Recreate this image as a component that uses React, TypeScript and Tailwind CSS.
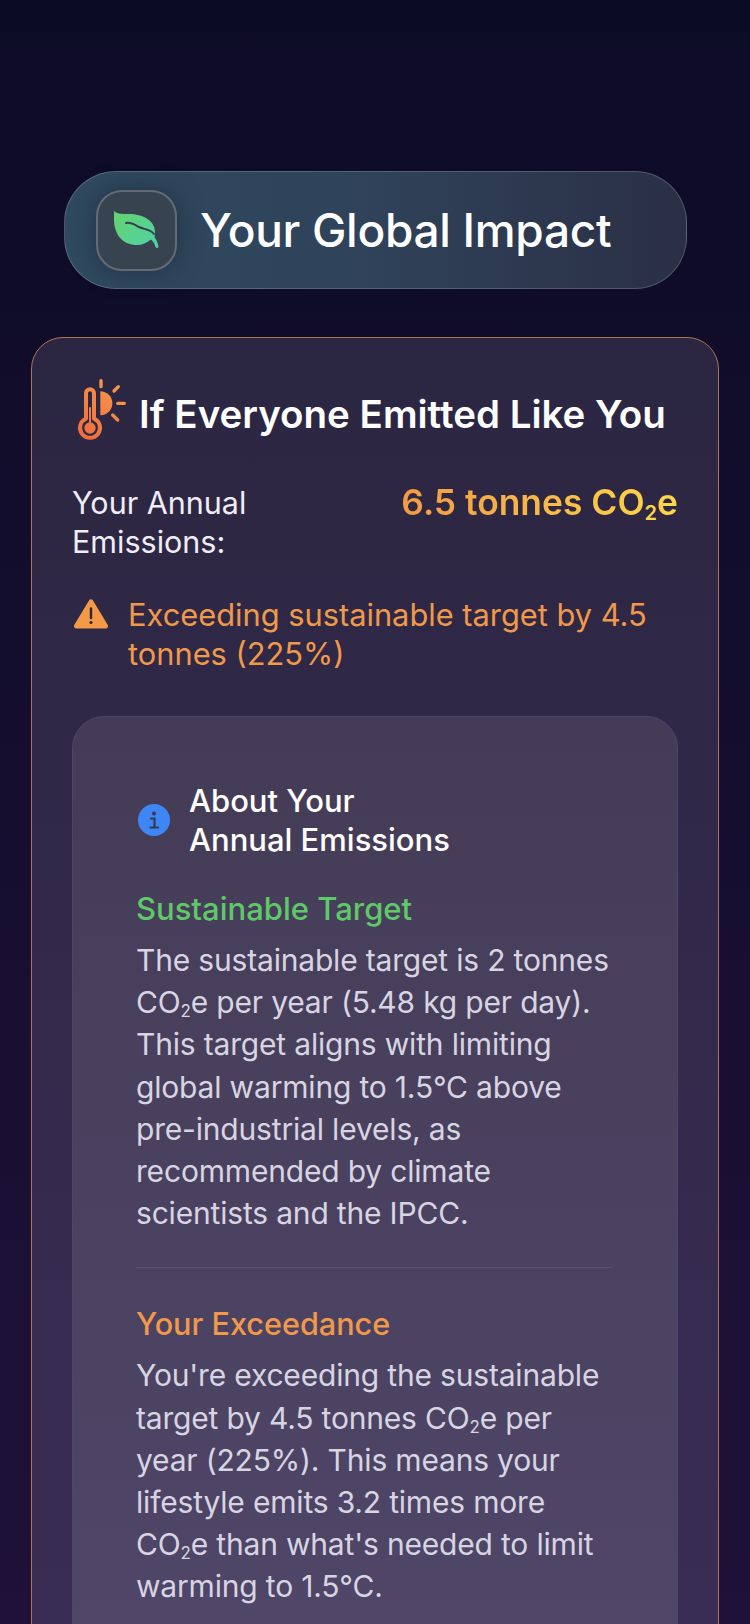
import React from "react";

function Leaf() {
  return (
    <svg width="45" height="38" viewBox="0 0 45 38" fill="none">
      <defs>
        <linearGradient id="leafG" x1="4" y1="4" x2="40" y2="36" gradientUnits="userSpaceOnUse">
          <stop offset="0" stopColor="#63d274" />
          <stop offset="1" stopColor="#4fd3a3" />
        </linearGradient>
      </defs>
      <path d="M0 0 C3 3 8 3 15 3 C28 3 41 9 41 21 C41 23 41 25 40.500 26 C42.500 29 44 32 44.500 36 C43.500 37.500 42 37 41.500 36 C41 33 39 30 37 28.500 C33 32 28 34 23 34 C9 34 0 24 0 8 Z" fill="url(#leafG)" />
      <path d="M12 12 C17 11 21 14 25 16 C30 18.500 36 18 40 23" stroke="#37404f" strokeWidth="2" strokeLinecap="round" fill="none" />
    </svg>
  );
}

function ThermoSun() {
  return (
    <svg width="64" height="80" viewBox="6 0 192 240" fill="none" className="shrink-0">
      <defs>
        <linearGradient id="tsG" x1="180" y1="30" x2="30" y2="210" gradientUnits="userSpaceOnUse">
          <stop offset="0" stopColor="#f9a24e" />
          <stop offset="1" stopColor="#ee6a3e" />
        </linearGradient>
      </defs>
      <path d="M91 70 A36 36 0 0 1 91 142 Z" fill="url(#tsG)" />
      <g stroke="url(#tsG)" strokeWidth="10" strokeLinecap="round">
        <path d="M93 38 V56" />
        <path d="M132 69 L145 56" />
        <path d="M143 106 H163" />
        <path d="M128 141 L143 156" />
      </g>
      <path d="M48 152 V76 A12 12 0 0 1 72 76 V152 A30 30 0 1 1 48 152 Z" stroke="url(#tsG)" strokeWidth="12" fill="none" strokeLinejoin="round" />
      <path d="M60 120 V170" stroke="url(#tsG)" strokeWidth="6" strokeLinecap="round" />
      <circle cx="60" cy="180" r="17" fill="url(#tsG)" />
    </svg>
  );
}

function Warn() {
  return (
    <svg width="34" height="30" viewBox="0 0 34 30" className="shrink-0">
      <path d="M17 3 L31.500 27 H2.500 Z" fill="#f29a48" stroke="#f29a48" strokeWidth="5" strokeLinejoin="round" />
      <path d="M17 9.500 V19" stroke="#2c2640" strokeWidth="2.400" strokeLinecap="round" />
      <circle cx="17" cy="23.500" r="1.600" fill="#2c2640" />
    </svg>
  );
}

function Info() {
  return (
    <svg width="32" height="32" viewBox="0 0 32 32" className="shrink-0">
      <circle cx="16" cy="16" r="16" fill="#3f86f5" />
      <circle cx="16" cy="9.500" r="2" fill="#3a3550" />
      <path d="M13 14.500 H16.500 V23 M12.500 23.500 H20" stroke="#3a3550" strokeWidth="2.200" fill="none" strokeLinecap="round" />
    </svg>
  );
}

const Sub = () => <sub className="text-[17px]">2</sub>;

export default function App() {
  return (
    <div
      className="h-[1624px] w-[750px] overflow-hidden bg-gradient-to-b from-[#0c0b26] to-[#1f1139] pt-[171px] text-white"
      style={{ fontFamily: "Inter, 'Noto Sans', sans-serif" }}
    >
      <div className="mx-[64px] flex h-[118px] w-[623px] items-center rounded-[52px] border border-[#ffffff2e] bg-gradient-to-r from-[#2f4a60] via-[#2f4259] to-[#2a2f45] pl-[31px]">
        <div className="flex h-[81px] w-[81px] shrink-0 items-center justify-center rounded-[26px] border-2 border-[#ffffff38] bg-[#384350] shadow-[0_0_24px_rgba(20,30,45,0.5)]">
          <Leaf />
        </div>
        <h1 className="ml-[23px] text-[46px] font-medium leading-none tracking-[-0.3px]">Your Global Impact</h1>
      </div>

      <div className="mx-[31px] mt-[48px] h-[1300px] rounded-t-[32px] border border-[#ad7650] bg-gradient-to-b from-[#2b2641] to-[#3a2d55] px-[40px] pt-[30px]">
        <div className="flex items-center">
          <ThermoSun />
          <h2 className="ml-[3px] mt-[12px] whitespace-nowrap text-[38.500px] font-semibold leading-none">If Everyone Emitted Like You</h2>
        </div>

        <div className="mt-[35px] flex justify-between">
          <div className="w-[220px] text-[30.500px] leading-[39px] text-[#efedf5]">Your Annual Emissions:</div>
          <div className="whitespace-nowrap bg-gradient-to-r from-[#f39a45] to-[#fbd748] bg-clip-text text-[35.400px] font-semibold leading-[39px] text-transparent">
            6.5 tonnes CO<sub className="text-[20px] text-[#fbd748]">2</sub>e
          </div>
        </div>

        <div className="mt-[34px] flex">
          <div className="ml-[2px] mt-[4px]"><Warn /></div>
          <p className="ml-[20px] text-[30.800px] leading-[39px] text-[#f0994a]">Exceeding sustainable target by 4.5 tonnes (225%)</p>
        </div>

        <div className="mt-[43px] h-[1000px] rounded-t-[32px] border border-[#484868] bg-gradient-to-b from-[#443c56] to-[#50476a] pl-[63px] pr-[64px] pt-[64px]">
          <div className="ml-[2px] flex items-center">
            <Info />
            <h3 className="ml-[19px] text-[31px] font-medium leading-[39px]">About Your<br />Annual Emissions</h3>
          </div>
          <h4 className="mt-[29px] text-[31px] font-medium leading-[42px] text-[#5fc868]">Sustainable Target</h4>
          <p className="mt-[9px] text-[30px] leading-[42.200px] tracking-[-0.18px] text-[#d8d5e2]">
            The sustainable target is 2 tonnes CO<Sub />e per year (5.48 kg per day). This target aligns with limiting global warming to 1.5°C above pre-industrial levels, as recommended by climate scientists and the IPCC.
          </p>
          <div className="mt-[33px] h-px bg-[#ffffff14]" />
          <h4 className="mt-[35px] text-[30.600px] font-medium leading-[42px] text-[#f0994a]">Your Exceedance</h4>
          <p className="mt-[9px] text-[30px] leading-[42.200px] tracking-[-0.18px] text-[#d8d5e2]">
            You're exceeding the sustainable target by 4.5 tonnes CO<Sub />e per year (225%). This means your lifestyle emits 3.2 times more CO<Sub />e than what's needed to limit warming to 1.5°C.
          </p>
        </div>
      </div>
    </div>
  );
}
